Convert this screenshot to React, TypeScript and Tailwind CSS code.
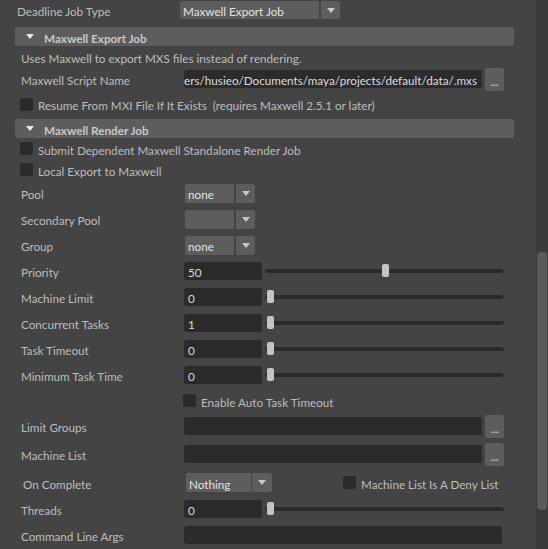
import React from 'react';

const FONT = { fontFamily: 'Lato, "Liberation Sans", sans-serif' };

const Arrow = ({ color = '#c8c8c8', w = 8, h = 5 }: { color?: string; w?: number; h?: number }) => (
  <svg width={w} height={h} viewBox={`0 0 ${w} ${h}`}>
    <path d={`M0 0 L${w} 0 L${w / 2} ${h} Z`} fill={color} />
  </svg>
);

// nudges glyphs down so they sit centred like the Qt widgets
const T = ({ children, className = '' }: { children: React.ReactNode; className?: string }) => (
  <span className={`translate-y-[2px] whitespace-pre ${className}`}>{children}</span>
);

const Dropdown = ({ value, mainW, arrowW = 19, gap = 2 }: { value: string; mainW: number; arrowW?: number; gap?: number }) => (
  <div className="flex h-[19px]" style={{ gap }}>
    <div className="flex items-center bg-[#5d5d5d] rounded-l-[2px] pl-[3px] text-[#e2e2e2] overflow-hidden" style={{ width: mainW }}>
      <T>{value}</T>
    </div>
    <div className="flex items-center justify-center bg-[#5d5d5d] rounded-r-[2px]" style={{ width: arrowW }}>
      <Arrow />
    </div>
  </div>
);

const Checkbox = () => <div className="w-[13px] h-[13px] shrink-0 rounded-[2px] bg-[#2b2b2b]" />;

const Input = ({ value = '', w }: { value?: string; w: number }) => (
  <div className="h-[18px] flex items-center rounded-[2px] bg-[#2b2b2b] pl-[4px] text-[#dcdcdc]" style={{ width: w }}>
    <T>{value}</T>
  </div>
);

const Browse = () => (
  <div className="w-[19px] h-[23px] ml-[3px] flex items-center justify-center rounded-[2px] bg-[#5d5d5d] text-[#e0e0e0] text-[11px]">
    <T>...</T>
  </div>
);

const Slider = ({ pos }: { pos: number }) => (
  <div className="relative ml-[3px] w-[239px] h-[4px] rounded-full bg-[#2b2b2b]">
    <div
      className="absolute top-[-5px] w-[7px] h-[13px] rounded-[2px] bg-[#c4c4c4]"
      style={{ left: pos }}
    />
  </div>
);

const Header = ({ title, className = '' }: { title: string; className?: string }) => (
  <div className={`ml-[15px] w-[499px] h-[19px] flex items-center rounded-[2px] bg-[#5d5d5d] ${className}`}>
    <div className="ml-[11px] w-[8px] flex items-center">
      <Arrow color="#e6e6e6" w={8} h={5} />
    </div>
    <span className="ml-[10px] translate-y-[2px] font-bold text-[#c8c8c8]">{title}</span>
  </div>
);

const Label = ({ children, pl = 21 }: { children: React.ReactNode; pl?: number }) => (
  <div className="w-[184px] shrink-0 flex text-[#bdbdbd]" style={{ paddingLeft: pl }}>
    <T>{children}</T>
  </div>
);

const NumRow = ({ label, value, pos }: { label: string; value: string; pos: number }) => (
  <div className="flex items-center h-[26px]">
    <Label>{label}</Label>
    <Input value={value} w={78} />
    <Slider pos={pos} />
  </div>
);

const CheckRow = ({ text, className = '' }: { text: string; className?: string }) => (
  <div className={`flex items-center gap-[5px] text-[#bdbdbd] ${className}`}>
    <Checkbox />
    <T>{text}</T>
  </div>
);

export default function App() {
  return (
    <div className="flex w-[548px] h-[549px] bg-[#444444] overflow-hidden text-[11.7px] leading-none" style={FONT}>
      <div className="w-[536px] flex flex-col">
        {/* Deadline Job Type */}
        <div className="flex items-start h-[20px] pt-[1px]">
          <div className="w-[180px] h-[18px] pl-[17px] flex items-center text-[#bdbdbd]">
            <T>Deadline Job Type</T>
          </div>
          <div className="flex h-[18px] gap-[2px]">
            <div className="w-[139px] flex items-center bg-[#5d5d5d] rounded-l-[2px] pl-[3px] text-[#e2e2e2]">
              <T>Maxwell Export Job</T>
            </div>
            <div className="w-[19px] flex items-center justify-center bg-[#5d5d5d] rounded-r-[2px]">
              <Arrow />
            </div>
          </div>
        </div>

        <Header title="Maxwell Export Job" className="mt-[7px]" />

        <div className="flex items-center h-[21px] pl-[21px] text-[#bdbdbd]">
          <T>Uses Maxwell to export MXS files instead of rendering.</T>
        </div>

        <div className="flex items-center h-[24px]">
          <Label>Maxwell Script Name</Label>
          <div className="w-[298px] h-[18px] flex items-center justify-end overflow-hidden rounded-[2px] bg-[#2b2b2b] pr-[5px] text-[#dcdcdc]">
            <T className="shrink-0">C:/Users/husieo/Documents/maya/projects/default/data/.mxs</T>
          </div>
          <Browse />
        </div>

        <CheckRow className="h-[26px] pl-[20px]" text="Resume From MXI File If It Exists  (requires Maxwell 2.5.1 or later)" />

        <Header title="Maxwell Render Job" className="mt-[2px]" />

        <CheckRow className="h-[21px] pl-[20px]" text="Submit Dependent Maxwell Standalone Render Job" />
        <CheckRow className="h-[21px] pl-[20px]" text="Local Export to Maxwell" />

        {[
          ['Pool', 'none'],
          ['Secondary Pool', ''],
          ['Group', 'none'],
        ].map(([label, value]) => (
          <div key={label} className="flex items-center h-[26px]">
            <Label>{label}</Label>
            <div className="ml-[1px]">
              <Dropdown value={value} mainW={49} />
            </div>
          </div>
        ))}

        <NumRow label="Priority" value="50" pos={117} />
        <NumRow label="Machine Limit" value="0" pos={2} />
        <NumRow label="Concurrent Tasks" value="1" pos={2} />
        <NumRow label="Task Timeout" value="0" pos={2} />
        <NumRow label="Minimum Task Time" value="0" pos={2} />

        <CheckRow className="h-[25px] pl-[183px]" text="Enable Auto Task Timeout" />

        <div className="flex items-center h-[26px]">
          <Label>Limit Groups</Label>
          <Input w={298} />
          <Browse />
        </div>
        <div className="flex items-center h-[30px]">
          <Label>Machine List</Label>
          <Input w={298} />
          <Browse />
        </div>

        <div className="flex items-center h-[27px]">
          <Label pl={23}>On Complete</Label>
          <div className="ml-[2px]">
            <Dropdown value="Nothing" mainW={65} arrowW={20} gap={1} />
          </div>
          <CheckRow className="ml-[71px]" text="Machine List Is A Deny List" />
        </div>

        <NumRow label="Threads" value="0" pos={2} />

        <div className="flex items-center h-[26px]">
          <Label>Command Line Args</Label>
          <Input w={318} />
        </div>
      </div>

      {/* scrollbar */}
      <div className="w-[12px] h-full bg-[#3a3a3a] pt-[252px] pl-[1px]">
        <div className="w-[10px] h-[258px] rounded-[4px] bg-[#5b5b5b]" />
      </div>
    </div>
  );
}
